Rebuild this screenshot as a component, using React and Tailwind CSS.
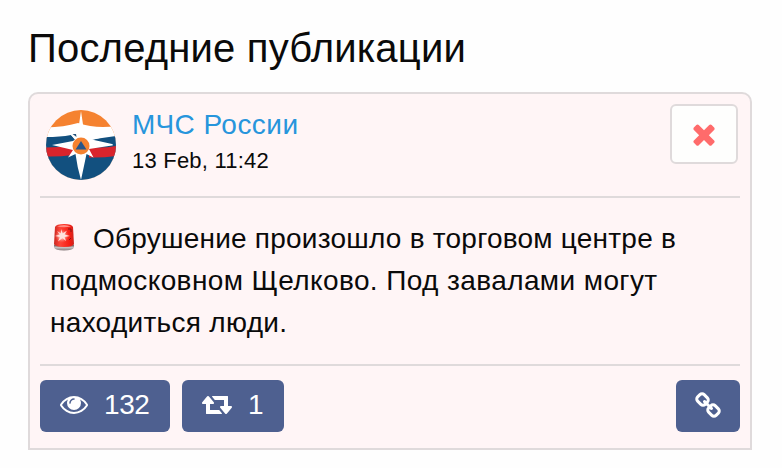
import React from "react";

const Icon = ({ path, viewBox = "0 0 1792 1792", className }) => (
  <svg viewBox={viewBox} className={className} fill="currentColor" aria-hidden="true">
    <path d={path} />
  </svg>
);

const icons = {
  times:
    "M1490 1322q0 40-28 68l-136 136q-28 28-68 28t-68-28l-294-294-294 294q-28 28-68 28t-68-28l-136-136q-28-28-28-68t28-68l294-294-294-294q-28-28-28-68t28-68l136-136q28-28 68-28t68 28l294 294 294-294q28-28 68-28t68 28l136 136q28 28 28 68t-28 68l-294 294 294 294q28 28 28 68z",
  eye: "M1664 960q-152-236-381-353 61 104 61 225 0 185-131.5 316.5t-316.5 131.5-316.5-131.5-131.5-316.5q0-121 61-225-229 117-381 353 133 205 333.5 326.5t434.5 121.5 434.5-121.5 333.5-326.5zm-720-384q0-20-14-34t-34-14q-125 0-214.5 89.5t-89.5 214.5q0 20 14 34t34 14 34-14 14-34q0-86 61-147t147-61q20 0 34-14t14-34zm848 384q0 34-20 69-140 230-376.5 368.5t-499.5 138.5-499.5-139-376.5-368q-20-35-20-69t20-69q140-229 376.5-368t499.5-139 499.5 139 376.5 368q20 35 20 69z",
  retweet:
    "M1280 1504q0 13-9.5 22.5t-22.5 9.5h-960q-8 0-13.5-2t-9-7-5.5-8-3-11.5-1-11.5v-600h-192q-26 0-45-19t-19-45q0-24 15-41l320-384q19-22 49-22t49 22l320 384q15 17 15 41 0 26-19 45t-45 19h-192v384h576q16 0 25 11l160 192q7 10 7 21zm640-416q0 24-15 41l-320 384q-20 23-49 23t-49-23l-320-384q-15-17-15-41 0-26 19-45t45-19h192v-384h-576q-16 0-25-12l-160-192q-7-9-7-20 0-13 9.5-22.5t22.5-9.5h960q8 0 13.5 2t9 7 5.5 8 3 11.5 1 11.5v600h192q26 0 45 19t19 45z",
  link: "M1520 1216q0-40-28-68l-208-208q-28-28-68-28-42 0-72 32 3 3 19 18.5t21.5 21.5 15 19 13 25.5 3.5 27.5q0 40-28 68t-68 28q-15 0-27.5-3.5t-25.5-13-19-15-21.5-21.5-18.5-19q-33 31-33 73 0 40 28 68l206 207q27 27 68 27 40 0 68-26l147-146q28-28 28-67zm-703-705q0-40-28-68l-206-207q-28-28-68-28-39 0-68 27l-147 146q-28 28-28 67 0 40 28 68l208 208q27 27 68 27 42 0 72-31-3-3-19-18.5t-21.5-21.5-15-19-13-25.5-3.5-27.5q0-40 28-68t68-28q15 0 27.5 3.5t25.5 13 19 15 21.5 21.5 18.5 19q33-31 33-73zm895 705q0 120-85 203l-147 146q-83 83-203 83-121 0-204-85l-206-207q-83-83-83-203 0-123 88-209l-88-88q-86 88-208 88-120 0-204-84l-208-208q-84-84-84-204t85-203l147-146q83-83 203-83 121 0 204 85l206 207q83 83 83 203 0 123-88 209l88 88q86-88 208-88 120 0 204 84l208 208q84 84 84 204z",
};

const Avatar = () => (
  <svg viewBox="0 0 70 70" className="w-[70px] h-[70px] shrink-0">
    <defs>
      <clipPath id="avatar-circle">
        <circle cx="35" cy="35" r="35" />
      </clipPath>
    </defs>
    <g clipPath="url(#avatar-circle)">
      <rect width="70" height="70" fill="#f58230" />
      <path d="M0 17.500 Q18 17 32 13 Q50 19 70 16 V70 H0Z" fill="#fff" />
      <path d="M0 27 Q14 27 25 25 L30 31 L42 30 Q56 28 70 26 V70 H0Z" fill="#12507f" />
      <path d="M24 17 H46 L54 28 L42 31 H31 L25 25Z" fill="#fff" />
      <path d="M0 37.500 Q13 37 27 36 V45 Q12 47 0 46.500Z M43 37 Q56 38.500 70 36 V46 Q56 48 43 47.500Z" fill="#d9242c" />
      <path d="M35 1 L39 28 L66 34 Q68 35 66 35.500 L43 39 L47.500 47.500 L40.500 44 Q38 56 35 70 Q31 56 29.500 44 L22 47.500 L27 40 L6 35 L27 31 L31 28Z" fill="#fff" />
      <path d="M26.500 24 h3.500 l0.500 3z" fill="#24527a" />
      <circle cx="35" cy="36" r="8.500" fill="#f58230" />
      <path d="M35 31 L40.500 39.500 H29.500Z" fill="#27558a" />
    </g>
  </svg>
);

const Siren = () => (
  <svg viewBox="0 0 28 30" className="inline-block w-[28px] h-[30px] align-[-4px]">
    <defs>
      <linearGradient id="siren-glass">
        <stop offset="0" stopColor="#c92822" />
        <stop offset="0.300" stopColor="#ff4538" />
        <stop offset="0.800" stopColor="#f51c12" />
        <stop offset="1" stopColor="#c92822" />
      </linearGradient>
      <linearGradient id="siren-base" x2="0" y2="1">
        <stop offset="0" stopColor="#5e4f50" />
        <stop offset="0.500" stopColor="#c4c0c0" />
        <stop offset="1" stopColor="#85797a" />
      </linearGradient>
      <radialGradient id="siren-glow">
        <stop offset="0" stopColor="#fff" />
        <stop offset="0.400" stopColor="#ffc5bd" stopOpacity="0.800" />
        <stop offset="1" stopColor="#ff5d50" stopOpacity="0" />
      </radialGradient>
    </defs>
    <path d="M4 22.500 Q14 26 24 22.500 V25.500 Q23 28.500 14 28.500 T4 25.500Z" fill="url(#siren-base)" />
    <path d="M5 5 Q6 2 14 2 T23 5 L24 22 Q23 25 14 25 T4 22Z" fill="url(#siren-glass)" />
    <path d="M7 4.500 Q14 1.500 21 4.500 Q14 6 7 4.500Z" fill="#ff8d84" />
    <path d="M18 7 h3 v3 M19 18 l2 -2" stroke="#8c1614" fill="none" />
    <circle cx="12" cy="14" r="7" fill="url(#siren-glow)" />
    <path d="M11 7 L12.700 11.500 L17 8.500 L14.500 12.500 L20 14 L14.500 15 L16 19 L12.500 16 L8 19.500 L10 15 L5 14 L10 12.500 L7 9 L11 11.500Z" fill="#ffe3de" />
  </svg>
);

const App = () => {
  return (
    <div className="h-[468px] overflow-hidden bg-[#fefefe] pt-[27px] pl-7 font-['Liberation_Sans',Arial,sans-serif] text-[#0a0a0a]">
      <h1 className="h-[65px] text-[40px] leading-[43px] tracking-[0.2px] whitespace-nowrap">
        Последние публикации
      </h1>

      <div className="w-[724px] h-[358px] rounded-t-[10px] border-2 border-[#dfdadb] bg-[#fff5f6] px-2.5">
        {/* Author */}
        <div className="flex h-[104px] border-b-2 border-[#dfdadb] pt-2.5 pl-1.5 pr-0.5">
          <div className="pt-[6px]">
            <Avatar />
          </div>
          <div className="ml-4 pt-[5px] whitespace-nowrap">
            <div className="text-[28px] leading-[32px] tracking-[0.45px] text-[#2795dc]">МЧС России</div>
            <div className="mt-1.5 text-[22px] leading-[28px] tracking-[0.22px]">13 Feb, 11:42</div>
          </div>
          <button className="ml-auto flex h-[60px] w-[68px] items-center justify-center rounded-md border-2 border-[#dfdadb] bg-[#fefefd] text-[#ff6b6b]">
            <Icon path={icons.times} className="h-8 w-8" />
          </button>
        </div>

        {/* Text */}
        <div className="h-[168px] border-b-2 border-[#dfdadb] pt-5 pl-2.5 text-[28px] leading-[42px] whitespace-nowrap">
          <p className="tracking-[0.23px]">
            <Siren />
            <span className="ml-[15px]">Обрушение произошло в торговом центре в</span>
          </p>
          <p className="tracking-[0.4px]">подмосковном Щелково. Под завалами могут</p>
          <p className="tracking-[0.3px]">находиться люди.</p>
        </div>

        {/* Actions */}
        <div className="flex gap-3 pt-3.5 text-[28px] leading-none text-white">
          <button className="flex h-[52px] w-[130px] items-center rounded-md bg-[#4e6090] pb-0.5 pl-5">
            <Icon path={icons.eye} className="-mt-0.5 h-7 w-7" />
            <span className="ml-4 tracking-[-0.4px]">132</span>
          </button>
          <button className="flex h-[52px] w-[102px] items-center rounded-md bg-[#4e6090] pb-0.5 pl-5">
            <Icon path={icons.retweet} viewBox="0 0 1920 1792" className="-mt-0.5 h-7 w-[30px]" />
            <span className="ml-4">1</span>
          </button>
          <button className="ml-auto flex h-[52px] w-16 items-center justify-center rounded-md bg-[#4e6090]">
            <Icon path={icons.link} className="h-7 w-7" />
          </button>
        </div>
      </div>
    </div>
  );
};

export default App;
